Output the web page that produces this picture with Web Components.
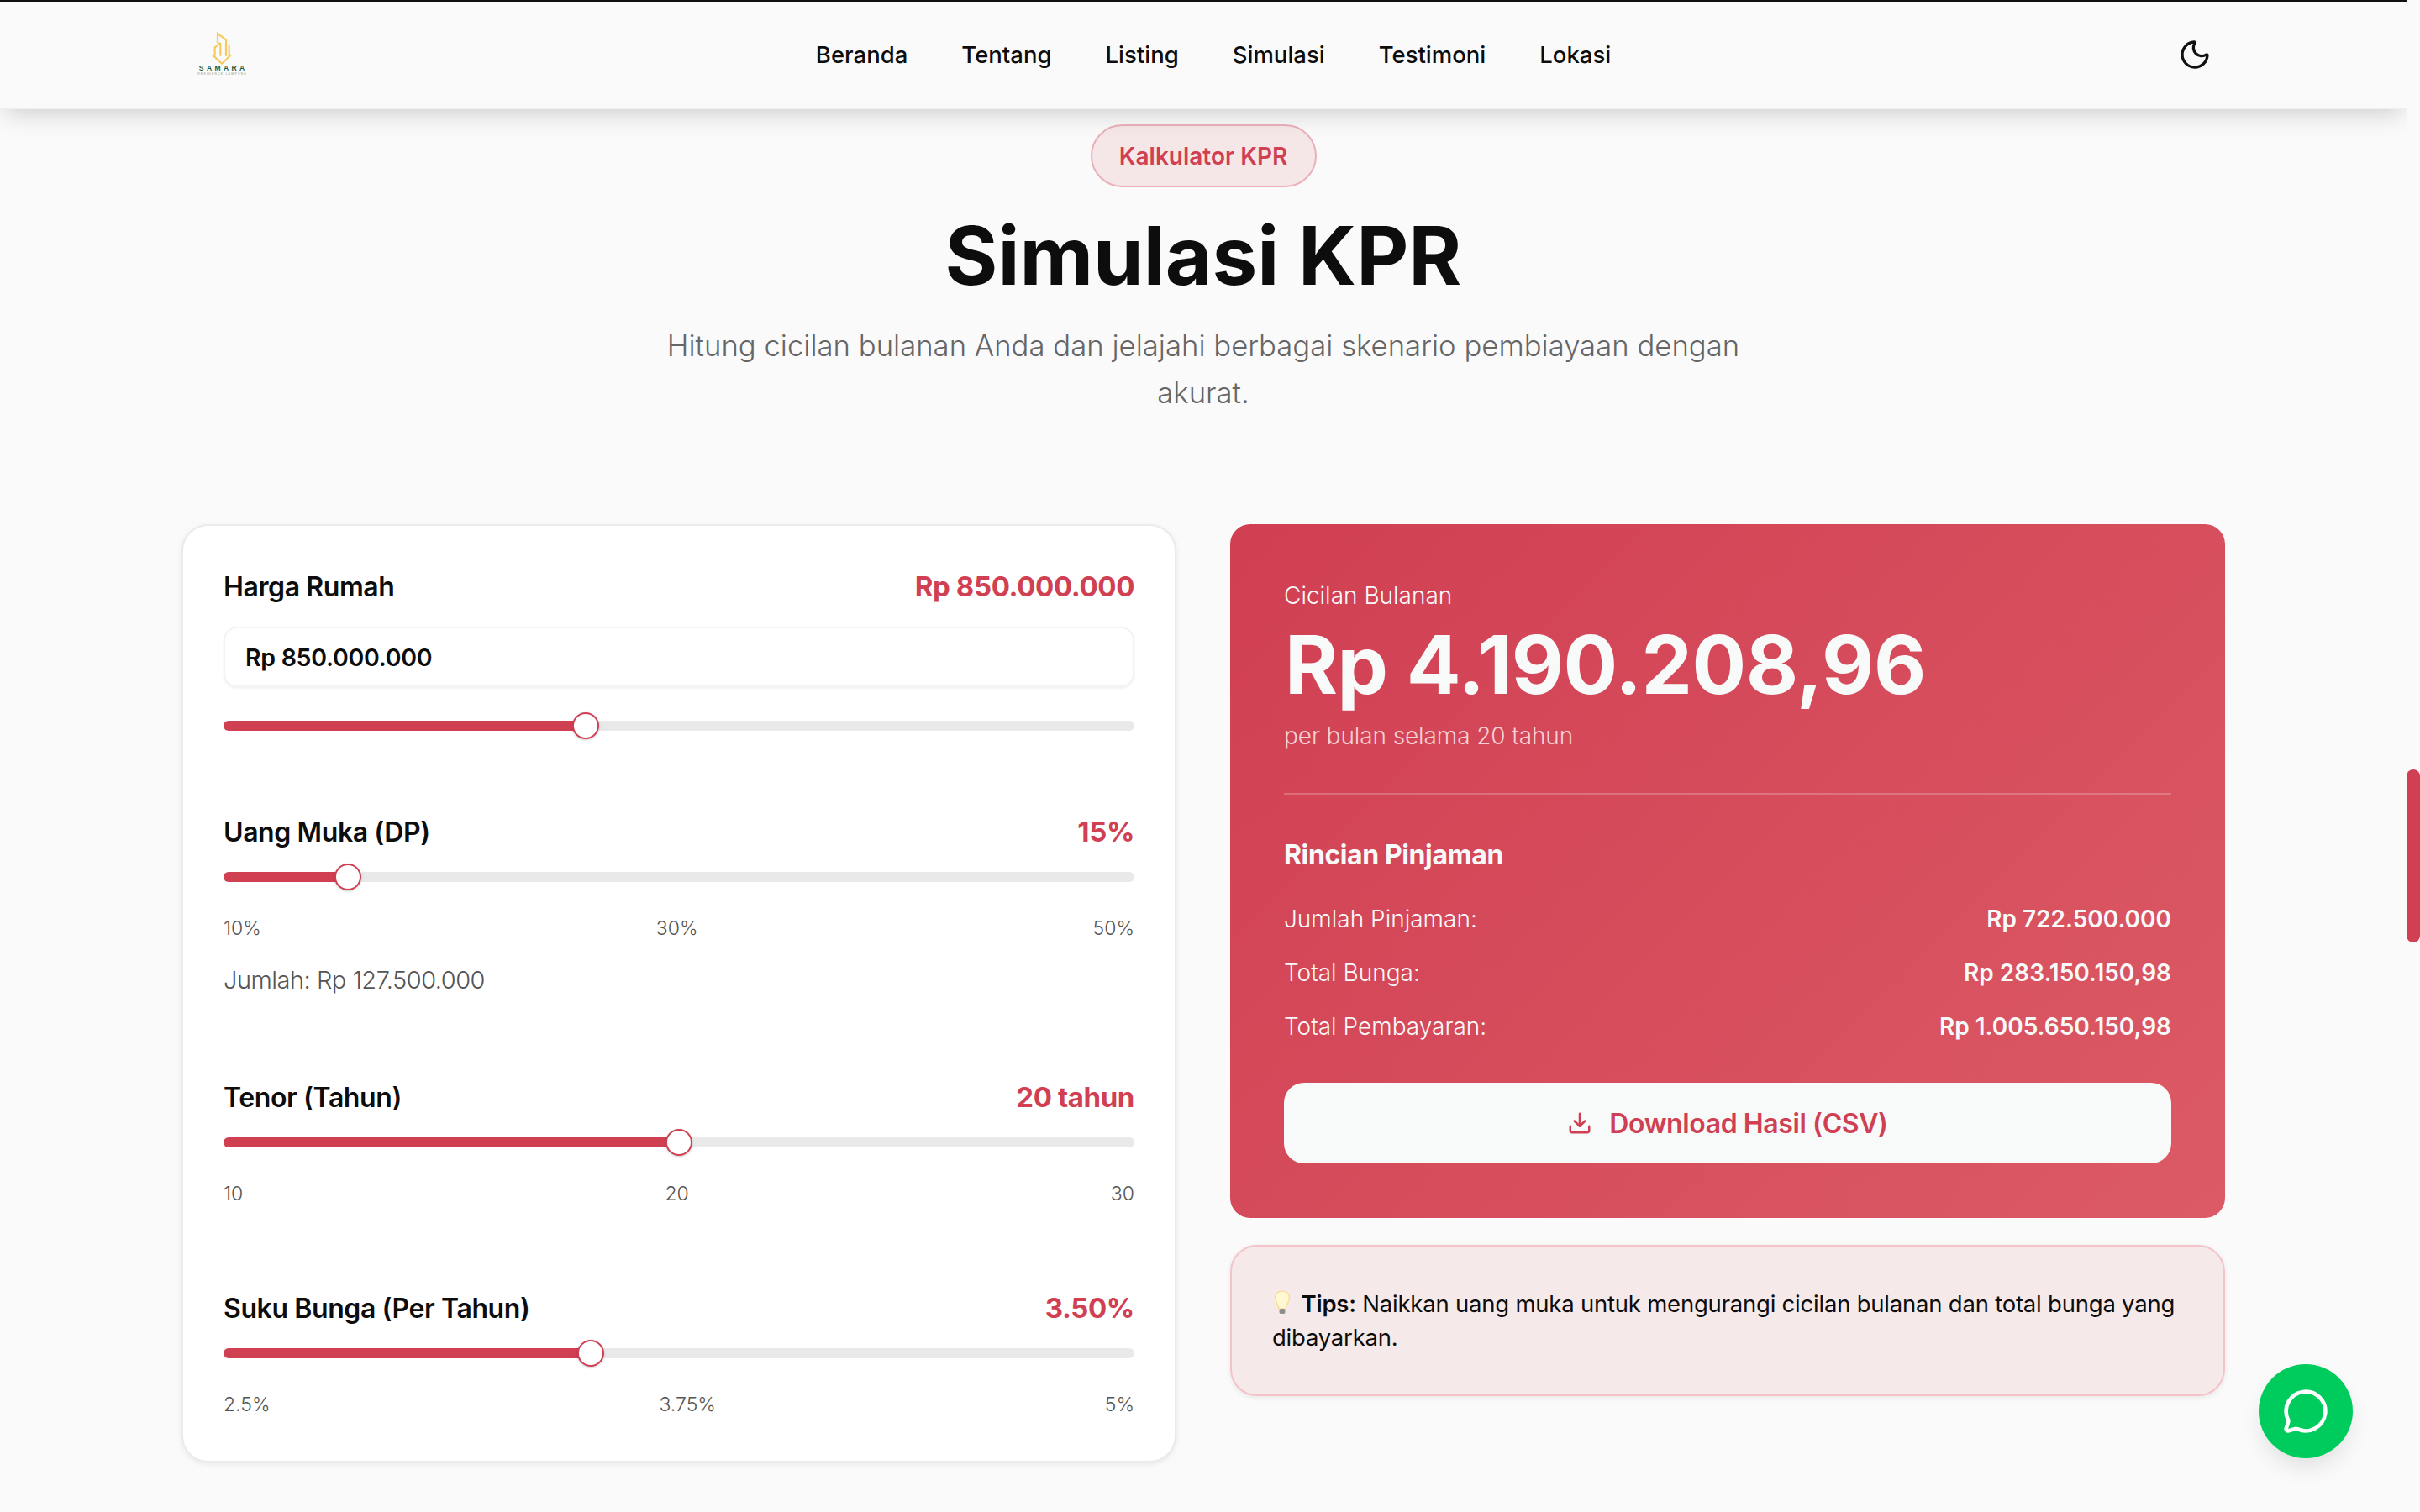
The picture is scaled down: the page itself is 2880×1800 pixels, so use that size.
<!DOCTYPE html>
<html lang="id">
<head>
<meta charset="utf-8">
<title>Simulasi KPR</title>
<style>
  html, body { margin: 0; height: 100%; overflow: hidden; background: #fafafa; }
  body { font-family: Inter, "Liberation Sans", sans-serif; color: #0d0d0d; }
</style>
</head>
<body>
<app-shell>
  <site-header></site-header>
  <kpr-intro></kpr-intro>
  <kpr-layout>
    <kpr-form slot="left">
      <kpr-field label="Harga Rumah" value="Rp 850.000.000" input="Rp 850.000.000" pos="0.3945"></kpr-field>
      <kpr-field style="margin-top:86px" label="Uang Muka (DP)" value="15%" pos="0.125" ticks="10%,30%,50%" note="Jumlah: Rp 127.500.000"></kpr-field>
      <kpr-field style="margin-top:96px" label="Tenor (Tahun)" value="20 tahun" pos="0.5" ticks="10,20,30"></kpr-field>
      <kpr-field style="margin-top:92px" label="Suku Bunga (Per Tahun)" value="3.50%" pos="0.4" ticks="2.5%,3.75%,5%"></kpr-field>
    </kpr-form>
    <kpr-result slot="right"></kpr-result>
    <kpr-tips slot="right"></kpr-tips>
  </kpr-layout>
  <wa-button></wa-button>
</app-shell>

<script>
class AppShell extends HTMLElement {
  constructor() {
    super();
    this.attachShadow({mode: "open"}).innerHTML = `
      <style>
        :host { display: flex; height: 1800px; overflow: hidden; }
        .page { position: relative; width: 2864px; height: 1800px; overflow: hidden; flex: none; }
        .gutter { flex: 1; padding-top: 916px; }
        .thumb { height: 206px; border-radius: 8px; background: #d03f52; }
      </style>
      <div class="page"><slot></slot></div>
      <div class="gutter"><div class="thumb"></div></div>`;
  }
}

class SiteHeader extends HTMLElement {
  constructor() {
    super();
    this.attachShadow({mode: "open"}).innerHTML = `
      <style>
        :host { display: flex; position: relative; z-index: 2; height: 126px; box-sizing: content-box;
          border-top: 2px solid #111; border-bottom: 2px solid #f0f0f0; background: #fafafa;
          padding: 0 216px; align-items: center; justify-content: space-between;
          box-shadow: 0 12px 26px -6px rgba(0,0,0,.17); }
        .logo { width: 96px; padding-bottom: 3px; display: flex; flex-direction: column; align-items: center; line-height: 1; }
        .logo svg { display: block; }
        .brand { height: 8px; font: 700 8.5px/8px "Liberation Sans", sans-serif; letter-spacing: 3.4px; color: #1d5a3c; margin-right: -3.4px; }
        .sub { font: 400 3.2px/4px "Liberation Sans", sans-serif; letter-spacing: 1.4px; color: #7d9488; margin-top: 1px; margin-right: -1.4px; white-space: nowrap; }
        nav { display: flex; gap: 64px; font-size: 27.5px; font-weight: 500; }
        button { all: unset; width: 72px; height: 72px; display: flex; align-items: center; justify-content: center; }
      </style>
      <div class="logo">
        <svg width="26" height="39" viewBox="76 22 78 117" fill="none" stroke="#f8c95c" stroke-width="6.5">
          <path d="M100 62V28l30 22v58"/>
          <path d="M110 60L90 78v30"/>
          <path d="M110 62v46"/>
          <path d="M141 66v42"/>
          <path d="M82 104l33 31 33-31"/>
        </svg>
        <div class="brand">SAMARA</div>
        <div class="sub">RESIDENCE LAMPUNG</div>
      </div>
      <nav>
        <span>Beranda</span><span>Tentang</span><span>Listing</span><span>Simulasi</span><span>Testimoni</span><span>Lokasi</span>
      </nav>
      <button aria-label="Tema">
        <svg width="40" height="40" viewBox="0 0 24 24" fill="none" stroke="#111" stroke-width="2" stroke-linecap="round" stroke-linejoin="round">
          <path d="M20.985 12.486a9 9 0 1 1-9.473-9.472c.405-.022.617.46.402.803a6 6 0 0 0 8.268 8.268c.344-.215.825-.013.803.401"/>
        </svg>
      </button>`;
  }
}

class KprIntro extends HTMLElement {
  constructor() {
    super();
    this.attachShadow({mode: "open"}).innerHTML = `
      <style>
        :host { display: flex; flex-direction: column; align-items: center; padding-top: 18px; }
        .badge { box-sizing: border-box; height: 75px; width: 269px; display: flex; align-items: center; justify-content: center;
          border: 2px solid #eab0b9; border-radius: 38px; background: #f5e6e8; color: #d03f52;
          font-size: 28px; font-weight: 600; letter-spacing: 0; }
        h1 { margin: 24px 0 0; font-size: 96px; line-height: 115px; font-weight: 700; letter-spacing: 0; color: #0d0d0d; }
        p { margin: 21px 0 0; width: 1344px; text-align: center; font-size: 34.7px; line-height: 56px; font-weight: 300; color: #666; }
      </style>
      <div class="badge">Kalkulator KPR</div>
      <h1>Simulasi KPR</h1>
      <p>Hitung cicilan bulanan Anda dan jelajahi berbagai skenario pembiayaan dengan akurat.</p>`;
  }
}

class KprLayout extends HTMLElement {
  constructor() {
    super();
    this.attachShadow({mode: "open"}).innerHTML = `
      <style>
        :host { display: grid; grid-template-columns: 1184px 1184px; gap: 64px; padding: 0 216px; margin-top: 129px; align-items: start; }
        .right { display: flex; flex-direction: column; gap: 32px; }
      </style>
      <div><slot name="left"></slot></div>
      <div class="right"><slot name="right"></slot></div>`;
  }
}

class KprForm extends HTMLElement {
  constructor() {
    super();
    this.attachShadow({mode: "open"}).innerHTML = `
      <style>
        :host { display: block; box-sizing: border-box; height: 1117px; padding: 48px; background: #fff;
          border: 2px solid #ebebeb; border-radius: 32px; box-shadow: 0 2px 6px rgba(0,0,0,.08); }
      </style>
      <slot></slot>`;
  }
}

class KprField extends HTMLElement {
  connectedCallback() {
    const f = Number(this.getAttribute("pos"));
    const ticks = this.getAttribute("ticks");
    const input = this.getAttribute("input");
    const note = this.getAttribute("note");
    // native range behaviour: thumb centre runs from 16px to 100% - 16px
    const at = `calc(16px + ${f} * (100% - 32px))`;
    this.attachShadow({mode: "open"}).innerHTML = `
      <style>
        :host { display: block; }
        .head { display: flex; justify-content: space-between; align-items: center; height: 48px; font-size: 32px; font-weight: 600; letter-spacing: -.4px; }
        .head b { font-weight: 700; color: #d03f52; font-size: 33px; }
        .input { box-sizing: border-box; height: 72px; margin-top: 24px; padding: 0 24px; display: flex; align-items: center;
          border: 2px solid #f3f3f3; border-radius: 16px; background: #fff; box-shadow: 0 2px 3px rgba(0,0,0,.05);
          font-size: 28.5px; font-weight: 600; letter-spacing: -.3px; }
        .slider { position: relative; height: 32px; margin-top: ${input ? 30 : 14}px; display: flex; align-items: center; }
        .track { width: 100%; height: 12px; border-radius: 6px;
          background: linear-gradient(to right, #d03f52 ${at}, #e9e9e9 ${at}); }
        .thumb { position: absolute; left: ${at}; top: 0; box-sizing: border-box; width: 32px; height: 32px; margin-left: -16px;
          border: 2.5px solid #d03f52; border-radius: 50%; background: #fff; box-shadow: 0 1px 3px rgba(0,0,0,.2); }
        .ticks { display: flex; justify-content: space-between; height: 40px; margin-top: 25px; align-items: center; font-size: 23px; font-weight: 300; color: #555; }
        .note { height: 40px; margin-top: 21px; display: flex; align-items: center; font-size: 29px; font-weight: 300; color: #555; letter-spacing: -.5px; }
      </style>
      <div class="head"><span>${this.getAttribute("label")}</span><b>${this.getAttribute("value")}</b></div>
      ${input ? `<div class="input">${input}</div>` : ""}
      <div class="slider"><div class="track"></div><div class="thumb"></div></div>
      ${ticks ? `<div class="ticks">${ticks.split(",").map(t => `<span>${t}</span>`).join("")}</div>` : ""}
      ${note ? `<div class="note">${note}</div>` : ""}`;
  }
}

class KprResult extends HTMLElement {
  constructor() {
    super();
    const rows = [
      ["Jumlah Pinjaman:", "Rp 722.500.000"],
      ["Total Bunga:", "Rp 283.150.150,98"],
      ["Total Pembayaran:", "Rp 1.005.650.150,98"],
    ];
    this.attachShadow({mode: "open"}).innerHTML = `
      <style>
        :host { display: block; box-sizing: border-box; height: 826px; padding: 65px 64px 0; border-radius: 24px; color: #f8fafa;
          background: linear-gradient(135deg, #d03f52, #dc5a66); }
        .small { height: 40px; display: flex; align-items: center; font-size: 28px; font-weight: 300; }
        .big { height: 116px; margin-top: 4px; padding-left: 1px; display: flex; align-items: center; font-size: 96px; font-weight: 700; letter-spacing: -.5px; white-space: nowrap; }
        .per { height: 40px; margin-top: 7px; display: flex; align-items: center; font-size: 28px; font-weight: 300; color: #f5d0d4; letter-spacing: -.1px; }
        hr { border: 0; height: 2px; background: rgba(255,255,255,.22); margin: 48px 0 0; }
        h3 { margin: 52px 0 0; height: 40px; line-height: 40px; font-size: 32px; font-weight: 700; letter-spacing: -.4px; }
        .row { display: flex; justify-content: space-between; align-items: center; height: 40px; margin-top: 24px; font-size: 28px; font-weight: 300; }
        h3 + .row { margin-top: 36px; }
        .row b { font-weight: 600; }
        button { all: unset; box-sizing: border-box; width: 100%; height: 96px; margin-top: 47px; display: flex; align-items: center; justify-content: center; gap: 20px;
          border-radius: 24px; background: #f8fafa; color: #d03f52; font-size: 32px; font-weight: 600; letter-spacing: -.4px; }
      </style>
      <div class="small">Cicilan Bulanan</div>
      <div class="big">Rp 4.190.208,96</div>
      <div class="per">per bulan selama 20 tahun</div>
      <hr>
      <h3>Rincian Pinjaman</h3>
      ${rows.map(r => `<div class="row"><span>${r[0]}</span><b>${r[1]}</b></div>`).join("")}
      <button>
        <svg width="30" height="30" viewBox="0 0 24 24" fill="none" stroke="currentColor" stroke-width="2" stroke-linecap="round" stroke-linejoin="round">
          <path d="M12 15V3"/><path d="M21 15v4a2 2 0 0 1-2 2H5a2 2 0 0 1-2-2v-4"/><path d="m7 10 5 5 5-5"/>
        </svg>
        Download Hasil (CSV)
      </button>`;
  }
}

class KprTips extends HTMLElement {
  constructor() {
    super();
    this.attachShadow({mode: "open"}).innerHTML = `
      <style>
        :host { display: block; box-sizing: border-box; height: 180px; padding: 48px; background: #f6e9ea;
          border: 2px solid #f4c3c8; border-radius: 32px; box-shadow: 0 2px 6px rgba(0,0,0,.08);
          font-size: 27.5px; line-height: 40px; letter-spacing: -.22px; }
        svg { vertical-align: -5px; margin-right: 3px; }
        b { font-weight: 600; }
      </style>
      <svg width="24" height="32" viewBox="0 0 24 32">
        <path d="M12 2C7 2 3.500 5.500 3.500 10c0 5 3.500 7 4.500 13h8c1-6 4.500-8 4.500-13 0-4.500-3.500-8-8.500-8z" fill="#fff8d2" stroke="#f7df98" stroke-width="1.5"/>
        <rect x="8.500" y="23" width="7" height="6" rx="2" fill="#8e8e8e"/>
      </svg>
      <b>Tips:</b> Naikkan uang muka untuk mengurangi cicilan bulanan dan total bunga yang dibayarkan.`;
  }
}

class WaButton extends HTMLElement {
  constructor() {
    super();
    this.attachShadow({mode: "open"}).innerHTML = `
      <style>
        :host { position: absolute; left: 2688px; top: 1624px; width: 112px; height: 112px; border-radius: 50%;
          display: flex; align-items: center; justify-content: center; background: #00cc5e;
          box-shadow: 0 14px 28px -6px rgba(0,0,0,.12); }
      </style>
      <svg width="56" height="56" viewBox="0 0 24 24" fill="none" stroke="#fff" stroke-width="2" stroke-linecap="round" stroke-linejoin="round">
        <path d="M2.992 16.342a2 2 0 0 1 .094 1.167l-1.065 3.29a1 1 0 0 0 1.236 1.168l3.413-.998a2 2 0 0 1 1.099.092 10 10 0 1 0-4.777-4.719"/>
      </svg>`;
  }
}

customElements.define("app-shell", AppShell);
customElements.define("site-header", SiteHeader);
customElements.define("kpr-intro", KprIntro);
customElements.define("kpr-layout", KprLayout);
customElements.define("kpr-form", KprForm);
customElements.define("kpr-field", KprField);
customElements.define("kpr-result", KprResult);
customElements.define("kpr-tips", KprTips);
customElements.define("wa-button", WaButton);
</script>
</body>
</html>
